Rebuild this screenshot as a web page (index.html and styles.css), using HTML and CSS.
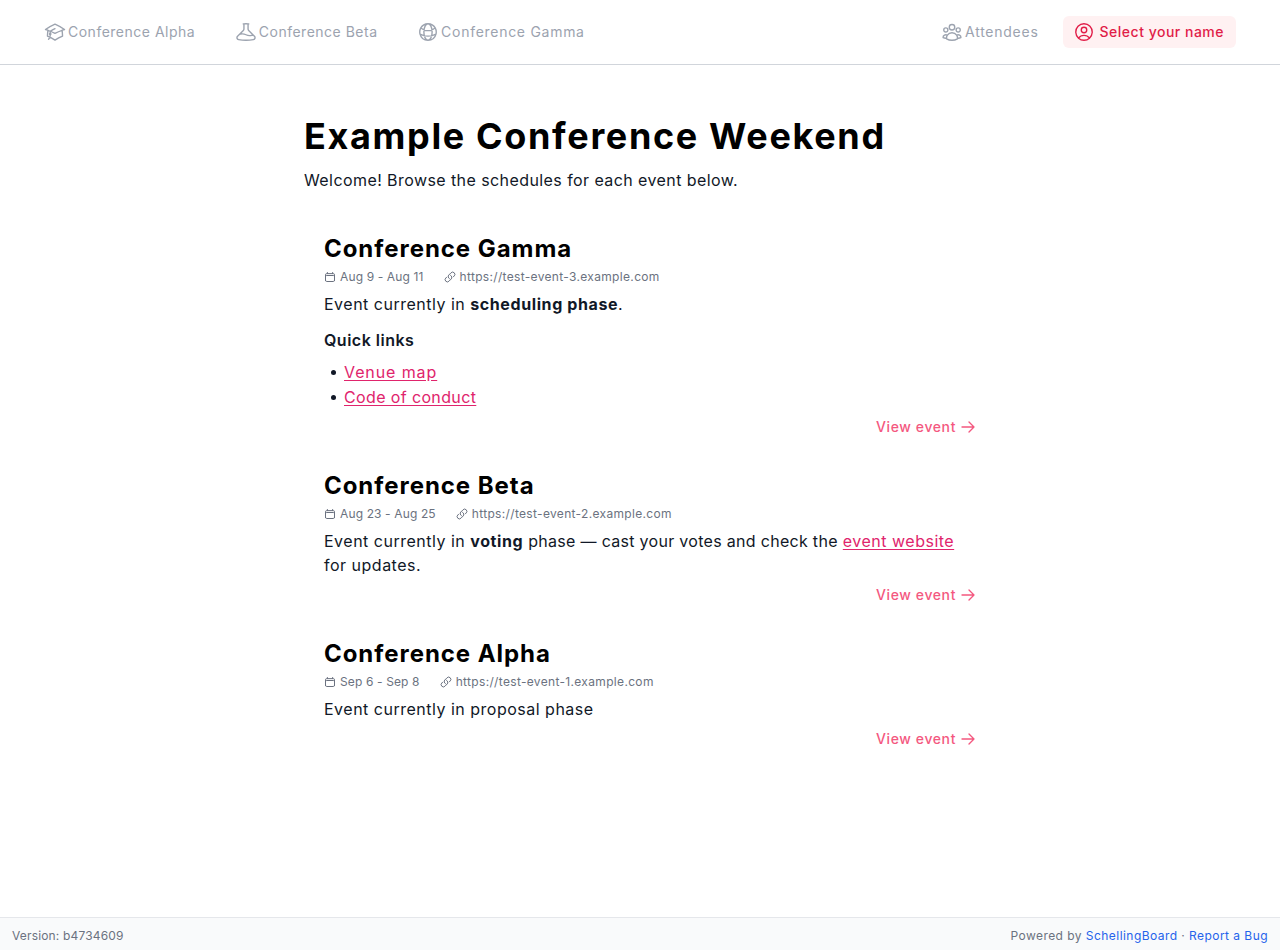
FILE: index.html
```html
<!DOCTYPE html>
<html lang="en">
<head>
<meta charset="utf-8">
<title>Example Conference Weekend</title>
<link rel="stylesheet" href="styles.css">
</head>
<body>
<div class="page">
<header class="nav">
  <nav class="nav-group">
    <a class="nav-item" href="#"><svg class="nav-icon" viewBox="0 0 24 24"><path d="M4.26 10.147a60.438 60.438 0 0 0-.491 6.347A48.62 48.62 0 0 1 12 20.904a48.62 48.62 0 0 1 8.232-4.41 60.46 60.46 0 0 0-.491-6.347m-15.482 0a50.636 50.636 0 0 0-2.658-.813A59.906 59.906 0 0 1 12 3.493a59.903 59.903 0 0 1 10.399 5.84c-.896.248-1.783.52-2.658.814m-15.482 0A50.717 50.717 0 0 1 12 13.489a50.702 50.702 0 0 1 7.74-3.342M6.75 15a.75.75 0 1 0 0-1.5.75.75 0 0 0 0 1.5Zm0 0v-3.675A55.378 55.378 0 0 1 12 8.443m-7.007 11.55A5.981 5.981 0 0 0 6.75 15.75v-1.5"/></svg><span>Conference Alpha</span></a>
    <a class="nav-item" href="#"><svg class="nav-icon" viewBox="0 0 24 24"><path d="M9.75 3.104v5.714a2.25 2.25 0 0 1-.659 1.591L5 14.5M9.75 3.104c-.251.023-.501.05-.75.082m.75-.082a24.301 24.301 0 0 1 4.5 0m0 0v5.714c0 .597.237 1.17.659 1.591L19.8 15.3M14.25 3.104c.251.023.501.05.75.082M19.8 15.3l-1.57.393A9.065 9.065 0 0 1 12 15a9.065 9.065 0 0 0-6.23-.693L5 14.5m14.8.8 1.402 1.402c1.232 1.232.65 3.318-1.067 3.611A48.309 48.309 0 0 1 12 21c-2.773 0-5.491-.235-8.135-.687-1.718-.293-2.3-2.379-1.067-3.61L5 14.5"/></svg><span>Conference Beta</span></a>
    <a class="nav-item nav-gamma" href="#"><svg class="nav-icon" viewBox="0 0 24 24"><path d="M12 21a9.004 9.004 0 0 0 8.716-6.747M12 21a9.004 9.004 0 0 1-8.716-6.747M12 21c2.485 0 4.5-4.03 4.5-9S14.485 3 12 3m0 18c-2.485 0-4.5-4.03-4.5-9S9.515 3 12 3m0 0a8.997 8.997 0 0 1 7.843 4.582M12 3a8.997 8.997 0 0 0-7.843 4.582m15.686 0A11.953 11.953 0 0 1 12 10.5c-2.998 0-5.74-1.1-7.843-2.918m15.686 0A8.959 8.959 0 0 1 21 12c0 .778-.099 1.533-.284 2.253m0 0A17.919 17.919 0 0 1 12 16.5c-3.162 0-6.133-.815-8.716-2.247m0 0A9.015 9.015 0 0 1 3 12c0-1.605.42-3.113 1.157-4.418"/></svg><span>Conference Gamma</span></a>
  </nav>
  <div class="nav-group nav-right">
    <a class="nav-item nav-attendees" href="#"><svg class="nav-icon" viewBox="0 0 24 24"><path d="M18 18.72a9.094 9.094 0 0 0 3.741-.479 3 3 0 0 0-4.682-2.72m.94 3.198.001.031c0 .225-.012.447-.037.666A11.944 11.944 0 0 1 12 21c-2.17 0-4.207-.576-5.963-1.584A6.062 6.062 0 0 1 6 18.719m12 0a5.971 5.971 0 0 0-.941-3.197m0 0A5.995 5.995 0 0 0 12 12.75a5.995 5.995 0 0 0-5.058 2.772m0 0a3 3 0 0 0-4.681 2.72 8.986 8.986 0 0 0 3.74.477m.94-3.197a5.971 5.971 0 0 0-.94 3.197M15 6.75a3 3 0 1 1-6 0 3 3 0 0 1 6 0Zm6 3a2.25 2.25 0 1 1-4.5 0 2.25 2.25 0 0 1 4.5 0Zm-13.5 0a2.25 2.25 0 1 1-4.5 0 2.25 2.25 0 0 1 4.5 0Z"/></svg><span>Attendees</span></a>
    <a class="nav-item nav-user" href="#"><svg class="nav-icon" viewBox="0 0 24 24"><path d="M17.982 18.725A7.488 7.488 0 0 0 12 15.75a7.488 7.488 0 0 0-5.982 2.975m11.963 0a9 9 0 1 0-11.963 0m11.963 0A8.966 8.966 0 0 1 12 21a8.966 8.966 0 0 1-5.982-2.275M15 9.75a3 3 0 1 1-6 0 3 3 0 0 1 6 0Z"/></svg><span>Select your name</span></a>
  </div>
</header>
<main class="main">
  <h1 class="title">Example Conference Weekend</h1>
  <p class="intro">Welcome! Browse the schedules for each event below.</p>

  <section class="card">
    <h2 class="card-title">Conference Gamma</h2>
    <div class="meta">
      <span class="meta-item meta-date"><svg class="meta-icon" viewBox="0 0 24 24"><path d="M6.75 3v2.25M17.25 3v2.25M3 18.75V7.5a2.25 2.25 0 0 1 2.25-2.25h13.5A2.25 2.25 0 0 1 21 7.5v11.25m-18 0A2.25 2.25 0 0 0 5.25 21h13.5A2.25 2.25 0 0 0 21 18.75m-18 0v-7.5A2.25 2.25 0 0 1 5.25 9h13.5A2.25 2.25 0 0 1 21 11.25v7.5"/></svg>Aug 9 - Aug 11</span>
      <span class="meta-item"><svg class="meta-icon" viewBox="0 0 24 24"><path d="M13.19 8.688a4.5 4.5 0 0 1 1.242 7.244l-4.5 4.5a4.5 4.5 0 0 1-6.364-6.364l1.757-1.757m13.35-.622 1.757-1.757a4.5 4.5 0 0 0-6.364-6.364l-4.5 4.5a4.5 4.5 0 0 0 1.242 7.244"/></svg>https://test-event-3.example.com</span>
    </div>
    <p class="card-text">Event currently in <strong>scheduling phase</strong>.</p>
    <h3 class="quick-title">Quick links</h3>
    <ul class="quick-list">
      <li><a class="text-link" href="#">Venue map</a></li>
      <li><a class="text-link" href="#">Code of conduct</a></li>
    </ul>
    <div class="card-foot"><a class="view-link" href="#">View event<svg class="arrow" viewBox="0 0 24 24"><path d="M13.5 4.5 21 12m0 0-7.5 7.5M21 12H3"/></svg></a></div>
  </section>

  <section class="card">
    <h2 class="card-title">Conference Beta</h2>
    <div class="meta">
      <span class="meta-item meta-date"><svg class="meta-icon" viewBox="0 0 24 24"><path d="M6.75 3v2.25M17.25 3v2.25M3 18.75V7.5a2.25 2.25 0 0 1 2.25-2.25h13.5A2.25 2.25 0 0 1 21 7.5v11.25m-18 0A2.25 2.25 0 0 0 5.25 21h13.5A2.25 2.25 0 0 0 21 18.75m-18 0v-7.5A2.25 2.25 0 0 1 5.25 9h13.5A2.25 2.25 0 0 1 21 11.25v7.5"/></svg>Aug 23 - Aug 25</span>
      <span class="meta-item"><svg class="meta-icon" viewBox="0 0 24 24"><path d="M13.19 8.688a4.5 4.5 0 0 1 1.242 7.244l-4.5 4.5a4.5 4.5 0 0 1-6.364-6.364l1.757-1.757m13.35-.622 1.757-1.757a4.5 4.5 0 0 0-6.364-6.364l-4.5 4.5a4.5 4.5 0 0 0 1.242 7.244"/></svg>https://test-event-2.example.com</span>
    </div>
    <p class="card-text">Event currently in <strong>voting</strong> <span class="tight">phase — cast your votes and check the</span> <a class="text-link" href="#">event website</a> for updates.</p>
    <div class="card-foot"><a class="view-link" href="#">View event<svg class="arrow" viewBox="0 0 24 24"><path d="M13.5 4.5 21 12m0 0-7.5 7.5M21 12H3"/></svg></a></div>
  </section>

  <section class="card">
    <h2 class="card-title">Conference Alpha</h2>
    <div class="meta">
      <span class="meta-item meta-date"><svg class="meta-icon" viewBox="0 0 24 24"><path d="M6.75 3v2.25M17.25 3v2.25M3 18.75V7.5a2.25 2.25 0 0 1 2.25-2.25h13.5A2.25 2.25 0 0 1 21 7.5v11.25m-18 0A2.25 2.25 0 0 0 5.25 21h13.5A2.25 2.25 0 0 0 21 18.75m-18 0v-7.5A2.25 2.25 0 0 1 5.25 9h13.5A2.25 2.25 0 0 1 21 11.25v7.5"/></svg>Sep 6 - Sep 8</span>
      <span class="meta-item"><svg class="meta-icon" viewBox="0 0 24 24"><path d="M13.19 8.688a4.5 4.5 0 0 1 1.242 7.244l-4.5 4.5a4.5 4.5 0 0 1-6.364-6.364l1.757-1.757m13.35-.622 1.757-1.757a4.5 4.5 0 0 0-6.364-6.364l-4.5 4.5a4.5 4.5 0 0 0 1.242 7.244"/></svg>https://test-event-1.example.com</span>
    </div>
    <p class="card-text">Event currently in proposal phase</p>
    <div class="card-foot"><a class="view-link" href="#">View event<svg class="arrow" viewBox="0 0 24 24"><path d="M13.5 4.5 21 12m0 0-7.5 7.5M21 12H3"/></svg></a></div>
  </section>
</main>
<footer class="footer">
  <span class="version">Version: b4734609</span>
  <span>Powered by <a class="foot-link" href="#">SchellingBoard</a> · <a class="foot-link" href="#">Report a Bug</a></span>
</footer>
</div>
</body>
</html>
```
FILE: styles.css
```css
* { box-sizing: border-box; }
html, body { margin: 0; padding: 0; height: 100%; }
body { font-family: Inter, "Liberation Sans", sans-serif; font-size: 16px; line-height: 24px; color: #111827; background: #fff; letter-spacing: 0.5px; }
a { text-decoration: none; color: inherit; }
svg { fill: none; stroke: currentColor; stroke-width: 1.5; stroke-linecap: round; stroke-linejoin: round; flex: none; }
.page { height: 950px; display: flex; flex-direction: column; }

.nav { height: 65px; flex: none; border-bottom: 1px solid #d1d5db; display: flex; justify-content: space-between; align-items: center; padding: 0 44px 0 32px; }
.nav-group { display: flex; align-items: center; gap: 15.6px; }
.nav-right { gap: 12px; }
.nav-item { display: flex; align-items: center; gap: 2px; height: 32px; padding: 0 12px; border-radius: 6px; font-size: 14px; font-weight: 400; color: #9ca3af; letter-spacing: 0.5px; }
.nav-icon { width: 22px; height: 22px; }
.nav-gamma { letter-spacing: 0.72px; }
.nav-attendees { letter-spacing: 0.75px; }
.nav-user { gap: 5px; padding-left: 10px; color: #e11d48; background: #fff1f2; font-weight: 500; letter-spacing: 0.5px; }

.main { flex: 1; width: 672px; margin: 0 auto; padding-top: 51px; }
.title { margin: 0; font-size: 36px; line-height: 40px; font-weight: 700; color: #000; letter-spacing: 1.65px; }
.intro { margin: 12px 0 0; letter-spacing: 0.42px; }

.card { margin-top: 41px; padding-left: 20px; }
.card + .card { margin-top: 33px; }
.card-title { margin: 0; font-size: 24px; line-height: 32px; font-weight: 700; color: #000; letter-spacing: 0.95px; }
.meta { display: flex; gap: 20px; margin-top: 4px; font-size: 12px; line-height: 16px; color: #6b7280; letter-spacing: 0.33px; }
.meta-item { display: flex; align-items: center; gap: 4px; }
.meta-date { letter-spacing: 0.13px; }
.meta-icon { width: 12px; height: 12px; stroke-width: 2; }
.card-text { margin: 7px 0 0; }
.card-text strong { font-weight: 700; letter-spacing: 0.6px; }
.tight { letter-spacing: 0.3px; }
.quick-title { margin: 12px 0 0; font-size: 16px; line-height: 24px; font-weight: 600; }
.quick-list { margin: 8px 0 0; padding: 0 0 0 7px; list-style: none; }
.quick-list li { display: flex; align-items: center; gap: 8px; margin-bottom: 1px; }
.quick-list li::before { content: ""; width: 5px; height: 5px; border-radius: 50%; background: #111827; }
.quick-list li:first-child .text-link { letter-spacing: 0.9px; }
.quick-list li:last-child .text-link { letter-spacing: 0.37px; }
.text-link { color: #e0246c; text-decoration: underline; text-underline-offset: 2px; }
.card-foot { display: flex; justify-content: flex-end; margin-top: 8px; }
.view-link { display: flex; align-items: center; gap: 4px; font-size: 14px; line-height: 20px; font-weight: 500; color: #f4587f; letter-spacing: 0.6px; }
.arrow { width: 16px; height: 16px; stroke-width: 2; }

.footer { height: 33px; flex: none; border-top: 1px solid #e5e7eb; background: #f9fafb; display: flex; justify-content: space-between; align-items: center; padding: 4px 12px 0; font-size: 12px; line-height: 16px; color: #6b7280; letter-spacing: 0.45px; }
.version { letter-spacing: 0.16px; }
.foot-link { color: #2563eb; }
```
